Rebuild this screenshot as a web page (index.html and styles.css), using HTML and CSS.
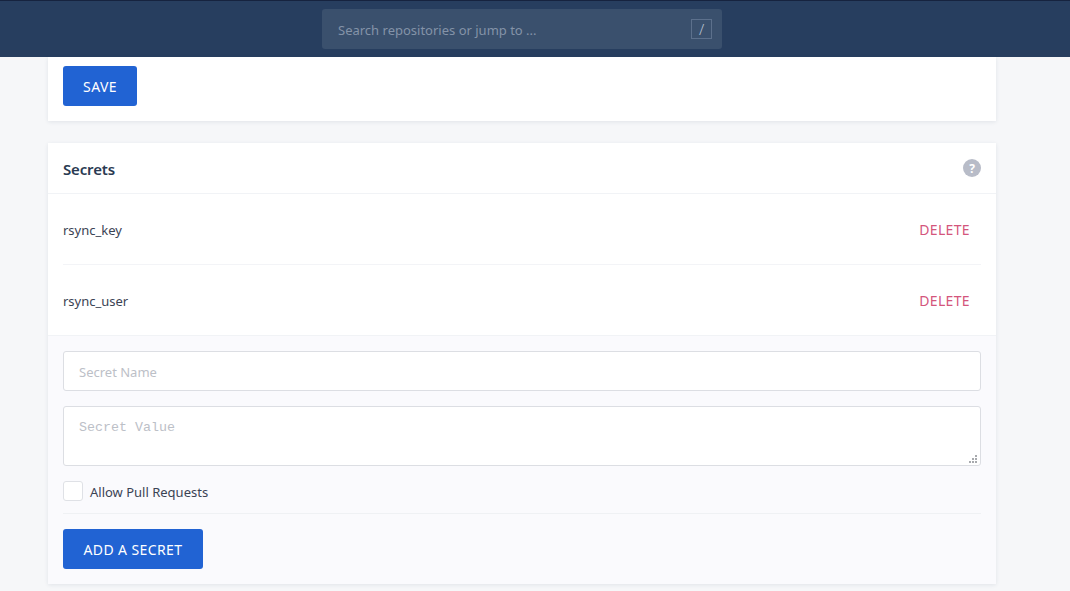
FILE: index.html
```html
<!DOCTYPE html>
<html lang="en">
<head>
<meta charset="utf-8">
<title>Secrets</title>
<link rel="stylesheet" href="styles.css">
</head>
<body>
<header class="topbar">
  <div class="search">
    <span class="search-text">Search repositories or jump to ...</span>
    <span class="search-key">/</span>
  </div>
</header>
<main class="page">
  <section class="card card-save">
    <button class="btn" type="button">SAVE</button>
  </section>
  <section class="card">
    <div class="card-head">
      <h2 class="card-title">Secrets</h2>
      <span class="help">?</span>
    </div>
    <div class="rows">
      <div class="row"><span class="row-name">rsync_key</span><a class="del">DELETE</a></div>
      <div class="row"><span class="row-name">rsync_user</span><a class="del">DELETE</a></div>
    </div>
    <form class="card-foot">
      <input class="field field-name" type="text" placeholder="Secret Name">
      <div class="area-wrap">
        <textarea class="field area" placeholder="Secret Value"></textarea>
        <svg class="grip" width="9" height="9" viewBox="0 0 9 9" aria-hidden="true">
          <path d="M6 0h2v2H6zM3 3h2v2H3zM6 3h2v2H6zM0 6h2v2H0zM3 6h2v2H3zM6 6h2v2H6z"/>
        </svg>
      </div>
      <label class="check"><span class="box"></span><span class="check-text">Allow Pull Requests</span></label>
      <div class="actions">
        <button class="btn btn-add" type="button">ADD A SECRET</button>
      </div>
    </form>
  </section>
</main>
</body>
</html>
```

FILE: styles.css
```css
* { box-sizing: border-box; }
html, body { margin: 0; height: 591px; overflow: hidden; }
body {
  background: #f6f7f9;
  font-family: "Noto Sans", "Open Sans", sans-serif;
  font-size: 13px;
  color: #2d3748;
}
.topbar {
  height: 57px;
  background: #273e5f;
  border-top: 1px solid #16233f;
  display: flex;
  justify-content: center;
  padding: 8px 26px 0 0;
}
.search {
  width: 400px;
  height: 40px;
  background: #3a506d;
  border-radius: 3px;
  display: flex;
  align-items: center;
  justify-content: space-between;
  padding: 0 10px 0 16px;
}
.search-text { color: #8493a8; font-size: 13px; padding-top: 2px; }
.search-key {
  width: 21px;
  height: 20px;
  border: 1px solid #5c708c;
  color: #b6c2d2;
  font-size: 15px;
  font-weight: 300;
  display: flex;
  align-items: center;
  justify-content: center;
}
.page {
  width: 948px;
  margin-left: 48px;
  display: flex;
  flex-direction: column;
  gap: 22px;
}
.card {
  background: #fff;
  box-shadow: 0 1px 4px rgba(40, 60, 90, .1);
}
.card-save { padding: 9px 15px 15px; height: 64px; }
.btn {
  display: block;
  height: 40px;
  width: 74px;
  border: 0;
  border-radius: 3px;
  padding: 0;
  background: #2163d3;
  color: #fff;
  font: 14px "Noto Sans", "Open Sans", sans-serif;
  letter-spacing: .4px;
}
.btn-add { width: 140px; }
.card-head {
  height: 51px;
  border-bottom: 1px solid #f1f3f6;
  display: flex;
  align-items: center;
  justify-content: space-between;
  padding: 0 15px;
}
.card-title { margin: 2px 0 0; font-size: 15px; font-weight: 600; color: #2a3a52; letter-spacing: -.15px; }
.help {
  width: 18px;
  height: 18px;
  border-radius: 50%;
  background: #b8bcc8;
  color: #fff;
  font-size: 12px;
  font-weight: 700;
  display: flex;
  align-items: center;
  justify-content: center;
}
.rows { padding: 0 15px; }
.row {
  height: 71px;
  display: flex;
  align-items: center;
  justify-content: space-between;
  padding: 1px 11px 0 0;
  border-bottom: 1px solid #f3f4f7;
}
.row:last-child { height: 70px; border-bottom: 0; }
.row-name { font-size: 13px; color: #3b4354; }
.del { font-size: 14px; color: #d4557c; letter-spacing: .35px; }
.card-foot {
  background: #fafafd;
  border-top: 1px solid #f1f3f6;
  padding: 15px;
  display: flex;
  flex-direction: column;
}
.field {
  display: block;
  width: 100%;
  height: 40px;
  border: 1px solid #dcdee3;
  border-radius: 3px;
  background: #fff;
  padding: 0 15px;
  font: 13px "Noto Sans", "Open Sans", sans-serif;
  outline: 0;
}
.field-name { padding-top: 2px; }
.field::placeholder { color: #bcc0c7; opacity: 1; }
.area-wrap { position: relative; margin-top: 15px; }
.area {
  height: 60px;
  padding: 13px 15px;
  resize: none;
  font: 13.33px "Liberation Mono", monospace;
}
.grip { position: absolute; right: 3px; bottom: 2px; fill: #a8aaae; }
.check {
  display: flex;
  align-items: center;
  gap: 7px;
  margin-top: 15px;
  height: 20px;
  font-size: 13px;
  color: #3b4354;
}
.check-text { padding-top: 2px; }
.box {
  width: 20px;
  height: 20px;
  background: #fff;
  border: 1px solid #dfe1e6;
  border-radius: 3px;
}
.actions {
  margin-top: 12px;
  padding-top: 15px;
  border-top: 1px solid #eff1f4;
}
```
